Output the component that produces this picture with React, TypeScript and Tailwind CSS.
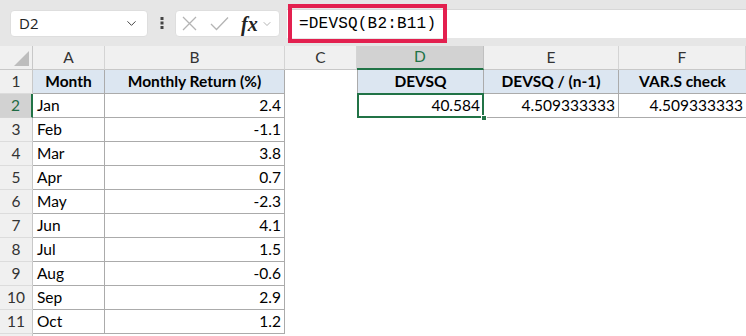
import { ChevronDown } from 'lucide-react'

const cols = ['A', 'B', 'C', 'D', 'E', 'F']

const data: [string, string][] = [
  ['Jan', '2.4'],
  ['Feb', '-1.1'],
  ['Mar', '3.8'],
  ['Apr', '0.7'],
  ['May', '-2.3'],
  ['Jun', '4.1'],
  ['Jul', '1.5'],
  ['Aug', '-0.6'],
  ['Sep', '2.9'],
  ['Oct', '1.2'],
]

const cell = "h-6 flex items-center text-[15.5px] text-black"

function RowHead({ n, active }: { n?: number; active?: boolean }) {
  return (
    <div
      className={
        active
          ? "h-6 flex items-center justify-center bg-[#d2d2d2] text-[#1e6b44] border-r-2 border-r-[#217346] border-b border-b-[#d4d4d4] text-[15.5px]"
          : "h-6 flex items-center justify-center bg-[#f0f0f0] text-[#333] border-r border-r-[#c8c8c8] border-b border-b-[#dcdcdc] text-[15.5px]"
      }
    >
      {n}
    </div>
  )
}

export default function App() {
  return (
    <div className="w-[746px] h-[336px] overflow-hidden bg-white font-['Lato','Noto_Sans',sans-serif]">
      {/* formula bar */}
      <div className="relative h-[46px] bg-[#e6e6e6] flex items-start pt-[9px]">
        <div className="ml-[10px] mt-px w-[138px] h-[27px] bg-white rounded-[4px] border border-[#dedede] flex items-center justify-between pl-[8px] pr-[8px]">
          <span className="text-[15px] text-[#222] font-['Open_Sans',sans-serif]">D2</span>
          <ChevronDown size={15} strokeWidth={1.6} className="text-[#444]" />
        </div>
        <div className="w-[27px] h-[28px] flex items-center justify-center text-[#444]">
          <svg width="4" height="12" viewBox="0 0 4 12">
            <rect x="0.5" y="0" width="3" height="3" fill="#444" />
            <rect x="0.5" y="4.5" width="3" height="3" fill="#444" />
            <rect x="0.5" y="9" width="3" height="3" fill="#444" />
          </svg>
        </div>
        <div className="mt-px w-[105px] h-[27px] bg-white rounded-[4px] border border-[#dedede] flex items-center pl-[5px] gap-[12px]">
          <svg width="17" height="17" viewBox="0 0 17 17" fill="none" stroke="#b4b4b4" strokeWidth="1.3">
            <path d="M2 2 L15 15 M15 2 L2 15" />
          </svg>
          <svg width="19" height="15" viewBox="0 0 19 15" fill="none" stroke="#b4b4b4" strokeWidth="1.3">
            <path d="M1 8 L6.5 13.5 L18 1.5" />
          </svg>
          <div className="flex items-center gap-[3px]">
            <span className="font-['Liberation_Serif',serif] italic text-[20px] text-[#222] leading-none font-semibold">fx</span>
            <ChevronDown size={12} strokeWidth={1.5} className="text-[#999]" />
          </div>
        </div>
        <div className="ml-[7px] flex-1 h-[29px] bg-white border-t border-[#d8d8d8] flex items-center pl-[12px]">
          <span className="font-['Liberation_Mono',monospace] text-[16px] text-black tracking-[0.2px]">=DEVSQ(B2:B11)</span>
        </div>
        <div className="absolute left-[288px] top-[4px] w-[159px] h-[39px] border-[4px] border-[#e3204f]" />
      </div>

      {/* grid */}
      <div className="grid grid-cols-[33px_72px_180px_72px_127px_135px_127px]">
        {/* column header row */}
        <div className="h-6 bg-[#f0f0f0] border-r border-r-[#c8c8c8] border-b border-b-[#c8c8c8] flex items-end justify-end pr-[3px] pb-[3px]">
          <svg width="15" height="15" viewBox="0 0 15 15">
            <path d="M15 0 L15 15 L0 15 Z" fill="#bdbdbd" />
          </svg>
        </div>
        {cols.map((c) =>
          c === 'D' ? (
            <div key={c} className="h-6 flex items-center justify-center bg-[#d2d2d2] text-[#217346] border-r border-r-[#c0c0c0] border-b-2 border-b-[#217346] text-[15.5px]">
              {c}
            </div>
          ) : (
            <div key={c} className="h-6 flex items-center justify-center bg-[#f0f0f0] text-[#333] border-r border-r-[#d4d4d4] border-b border-b-[#c8c8c8] text-[15.5px]">
              {c}
            </div>
          )
        )}

        {/* row 1 */}
        <RowHead n={1} />
        <div className={`${cell} justify-center font-bold bg-[#dce6f1] border-r border-b border-[#ababab]`}>Month</div>
        <div className={`${cell} justify-center font-bold bg-[#dce6f1] border-r border-b border-[#ababab]`}>Monthly Return (%)</div>
        <div className={cell} />
        <div className={`${cell} justify-center font-bold bg-[#dce6f1] border-l border-r border-b border-[#ababab]`}>DEVSQ</div>
        <div className={`${cell} justify-center font-bold bg-[#dce6f1] border-r border-b border-[#ababab]`}>DEVSQ / (n-1)</div>
        <div className={`${cell} justify-center font-bold bg-[#dce6f1] border-b border-[#ababab]`}>VAR.S check</div>

        {data.map(([m, v], i) => (
          <div key={m} className="contents">
            <RowHead n={i + 2} active={i === 0} />
            <div className={`${cell} pl-[4px] border-r border-b border-[#ababab]`}>{m}</div>
            <div className={`${cell} justify-end pr-[3px] border-r border-b border-[#ababab]`}>{v}</div>
            <div className={cell} />
            {i === 0 ? (
              <>
                <div className={`${cell} relative justify-end pr-[3px] border-l border-r border-b border-[#ababab]`}>
                  40.584
                  <div className="absolute -left-px -top-px -right-px -bottom-px border-2 border-[#217346]" />
                  <div className="absolute -right-[4px] -bottom-[4px] w-[6px] h-[6px] bg-[#217346] border border-white" />
                </div>
                <div className={`${cell} justify-end pr-[3px] border-r border-b border-[#ababab]`}>4.509333333</div>
                <div className={`${cell} justify-end pr-[3px] border-b border-[#ababab]`}>4.509333333</div>
              </>
            ) : (
              <>
                <div className={cell} />
                <div className={cell} />
                <div className={cell} />
              </>
            )}
          </div>
        ))}
        <RowHead />
      </div>
    </div>
  )
}
